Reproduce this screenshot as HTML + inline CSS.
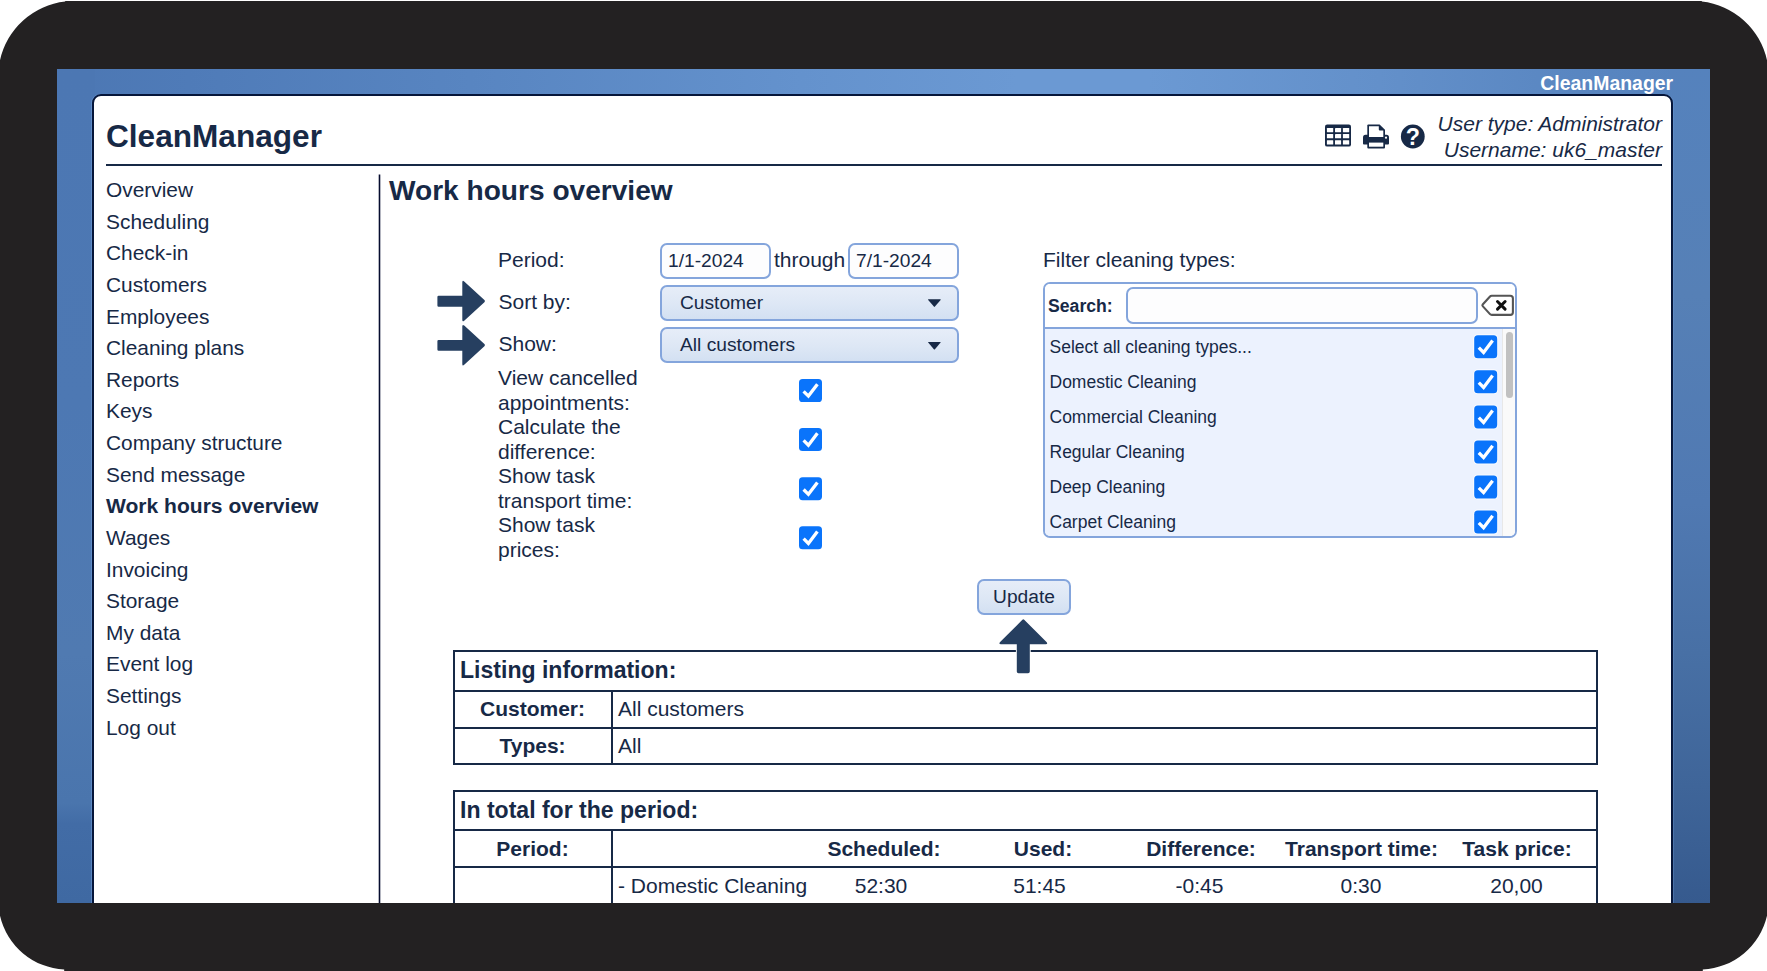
<!DOCTYPE html>
<html>
<head>
<meta charset="utf-8">
<title>CleanManager</title>
<style>
*{box-sizing:border-box;margin:0;padding:0}
html,body{width:1767px;height:971px;overflow:hidden;background:#fff}
body{font-family:"Liberation Sans",sans-serif;color:#172946;position:relative}
#frame{position:absolute;left:0;top:1px;width:1767px;height:970px;background:#232122}
#corners{position:absolute;left:0;top:0}
#blue{position:absolute;left:57px;top:69px;width:1653px;height:834px;overflow:hidden;
 background:
  linear-gradient(180deg,#4c77b3 0%,#4d78b3 40%,#507ab1 70%,#4a75ad 88%,#426ca6 90.5%,#3f69a2 100%) left top/38px 100% no-repeat,
  linear-gradient(180deg,#5582bd 0%,#5680b6 27%,#5079b2 52%,#4870a5 70%,#3f6599 86%,#365a8e 100%) right top/40px 100% no-repeat,
  linear-gradient(90deg,#4c77b3 0%,#4f7bb8 8%,#5885c1 25%,#6492cd 45%,#6b99d3 58%,#6b99d3 66%,#6390ca 80%,#5986c1 92%,#5582bd 100%)}
#panel{position:absolute;left:35px;top:25px;width:1581px;height:900px;background:#fff;border:2px solid #06163a;border-radius:9px 9px 0 0;box-shadow:-1px 0 0 rgba(120,165,225,.45),1px 0 0 rgba(120,165,225,.3)}
#brand{position:absolute;left:1400px;top:4px;width:216.2px;font-weight:bold;font-size:19.45px;line-height:20px;color:#fff;text-align:right;white-space:nowrap}
#page{position:absolute;left:0;top:0;width:1767px;height:903px;overflow:hidden}
#title{position:absolute;white-space:nowrap;left:106px;top:118px;font-size:31.6px;font-weight:bold;line-height:36px}
#hr{position:absolute;left:106px;top:164px;width:1556px;height:2px;background:#172946}
#vr{position:absolute;left:379px;top:175px;width:2px;height:740px;background:#172946}
#menu{position:absolute;left:106px;top:174px;font-size:20.9px;line-height:31.63px}
#menu div{white-space:nowrap}
#menu .cur{font-weight:bold;font-size:21.05px}
#h1{position:absolute;white-space:nowrap;left:389px;top:174px;font-size:28.1px;font-weight:bold;line-height:34px}
#user{position:absolute;left:1400px;top:110.6px;width:262px;font-style:italic;font-size:21px;line-height:26.6px;text-align:right;white-space:nowrap}
.inp{position:absolute;background:#fdfdfe;border:2px solid #84a5dc;border-radius:7px;font-size:19.2px;line-height:32px;padding-left:6px;white-space:nowrap}
.sel{position:absolute;border:2px solid #84a5dc;border-radius:7px;font-size:19.2px;line-height:31px;padding-left:18px;white-space:nowrap;
 background:linear-gradient(180deg,#e6edf8 0%,#dde7f5 55%,#d3e0f2 100%)}
#fbox{position:absolute;left:1043px;top:282px;width:474px;height:256px;border:2px solid #84a5dc;border-radius:7px;background:#fff;overflow:hidden}
#fsearch{position:absolute;left:0;top:0;width:470px;height:45px;border-bottom:2px solid #84a5dc;background:#fff}
#flist{position:absolute;left:0;top:45px;width:470px;height:209px;background:#ecf2fe;font-size:17.5px}
#flist .it{position:absolute;left:4.5px;white-space:nowrap;line-height:22px}
.tb{position:absolute;border:2px solid #172946}
.hl{position:absolute;height:2px;background:#172946}
.vl{position:absolute;width:2px;background:#172946}
.t{position:absolute;white-space:nowrap;font-size:21px;line-height:26px}
.t.lbl{line-height:24.5px}
.b{font-weight:bold}
.c{transform:translateX(-50%)}
#ov{position:absolute;left:0;top:0;pointer-events:none}
</style>
</head>
<body>
<div id="frame"></div>
<svg id="corners" width="1767" height="971" viewBox="0 0 1767 971"><g fill="#fff"><path d="M0 0 H65.2 V1.55 A75.1 75.1 0 0 0 0 60.3 Z"/><path d="M1767 0 H1701.8 V1.55 A75.1 75.1 0 0 1 1767 60.3 Z"/><path d="M0 971 V915.7 A69.7 69.7 0 0 0 64.2 969.6 V971 Z"/><path d="M1767 971 V915.7 A69.7 69.7 0 0 1 1702.8 969.6 V971 Z"/></g></svg>
<div id="blue">
  <div id="brand">CleanManager</div>
  <div id="panel"></div>
</div>
<div id="page">
  <div id="title">CleanManager</div>
  <div id="hr"></div>
  <div id="menu"><div>Overview</div><div>Scheduling</div><div>Check-in</div><div>Customers</div><div>Employees</div><div>Cleaning plans</div><div>Reports</div><div>Keys</div><div>Company structure</div><div>Send message</div><div class="cur">Work hours overview</div><div>Wages</div><div>Invoicing</div><div>Storage</div><div>My data</div><div>Event log</div><div>Settings</div><div>Log out</div></div>
  <div id="h1">Work hours overview</div>
  <div id="user">User type: Administrator<br>Username: uk6_master</div>
  <div class="t" style="left:498px;top:247px">Period:</div>
  <div class="inp" style="left:660px;top:243px;width:111px;height:36px">1/1-2024</div>
  <div class="t" style="left:774px;top:247px">through</div>
  <div class="inp" style="left:848px;top:243px;width:111px;height:36px">7/1-2024</div>
  <div class="t" style="left:498.5px;top:289px">Sort by:</div>
  <div class="sel" style="left:660px;top:285px;width:299px;height:36px">Customer</div>
  <div class="t" style="left:498.5px;top:331px">Show:</div>
  <div class="sel" style="left:660px;top:327px;width:299px;height:36px">All customers</div>
  <div class="t lbl" style="left:498px;top:366px">View cancelled<br>appointments:<br>Calculate the<br>difference:<br>Show task<br>transport time:<br>Show task<br>prices:</div>
  <div class="t" style="left:1043px;top:247px">Filter cleaning types:</div>
  <div id="fbox">
    <div id="fsearch">
      <div class="t b" style="left:3px;top:9px;font-size:17.65px">Search:</div>
      <div class="inp" style="left:81px;top:3px;width:352px;height:37px"></div>
    </div>
    <div id="flist">
      <div class="it" style="top:7px">Select all cleaning types...</div>
      <div class="it" style="top:42px">Domestic Cleaning</div>
      <div class="it" style="top:77px">Commercial Cleaning</div>
      <div class="it" style="top:112px">Regular Cleaning</div>
      <div class="it" style="top:147px">Deep Cleaning</div>
      <div class="it" style="top:182px">Carpet Cleaning</div>
      <div style="position:absolute;left:457px;top:0;width:13px;height:209px;background:#fafafa;border-left:1px solid #e8e8e8"></div>
      <div style="position:absolute;left:461px;top:3px;width:7px;height:66px;border-radius:4px;background:#c1c1c1"></div>
    </div>
  </div>
  <div class="sel" style="left:977px;top:579px;width:94px;height:36px;padding:0;text-align:center;line-height:32px">Update</div>
  <div class="tb" style="left:453px;top:650px;width:1145px;height:115px"></div>
  <div class="hl" style="left:453px;top:690px;width:1145px"></div>
  <div class="hl" style="left:453px;top:727px;width:1145px"></div>
  <div class="vl" style="left:611px;top:690px;height:75px"></div>
  <div class="t b" style="left:460px;top:657px;font-size:23.05px">Listing information:</div>
  <div class="t b c" style="left:532.5px;top:696px">Customer:</div>
  <div class="t" style="left:618px;top:696px">All customers</div>
  <div class="t b c" style="left:532.5px;top:733px">Types:</div>
  <div class="t" style="left:618px;top:733px">All</div>
  <div class="tb" style="left:453px;top:790px;width:1145px;height:200px"></div>
  <div class="hl" style="left:453px;top:829px;width:1145px"></div>
  <div class="hl" style="left:453px;top:866px;width:1145px"></div>
  <div class="vl" style="left:611px;top:829px;height:120px"></div>
  <div class="t b" style="left:460px;top:797px;font-size:23.05px">In total for the period:</div>
  <div class="t b c" style="left:532.5px;top:836px">Period:</div>
  <div class="t b c" style="left:884px;top:836px">Scheduled:</div>
  <div class="t b c" style="left:1043px;top:836px">Used:</div>
  <div class="t b c" style="left:1201px;top:836px">Difference:</div>
  <div class="t b c" style="left:1361.5px;top:836px">Transport time:</div>
  <div class="t b c" style="left:1517px;top:836px">Task price:</div>
  <div class="t" style="left:618px;top:873px">- Domestic Cleaning</div>
  <div class="t c" style="left:881px;top:873px">52:30</div>
  <div class="t c" style="left:1039.5px;top:873px">51:45</div>
  <div class="t c" style="left:1199.5px;top:873px">-0:45</div>
  <div class="t c" style="left:1361px;top:873px">0:30</div>
  <div class="t c" style="left:1516.5px;top:873px">20,00</div>
  <svg id="ov" width="1767" height="971" viewBox="0 0 1767 971"><rect x="378.7" y="174.5" width="1.6" height="740" fill="#060c2e"/>
<g transform="translate(1325,124.4)"><rect x="0" y="0" width="26" height="22.2" rx="2.2" fill="#172946"/><g fill="#fff"><rect x="1.9" y="3.7" width="6.3" height="4.1" rx=".4"/><rect x="10" y="3.7" width="6.1" height="4.1" rx=".4"/><rect x="17.9" y="3.7" width="6.3" height="4.1" rx=".4"/><rect x="1.9" y="9.7" width="6.3" height="4.2" rx=".4"/><rect x="10" y="9.7" width="6.1" height="4.2" rx=".4"/><rect x="17.9" y="9.7" width="6.3" height="4.2" rx=".4"/><rect x="1.9" y="15.8" width="6.3" height="4.4" rx=".4"/><rect x="10" y="15.8" width="6.1" height="4.4" rx=".4"/><rect x="17.9" y="15.8" width="6.3" height="4.4" rx=".4"/></g></g>
<g transform="translate(1363,124.5)"><g fill="#172946"><path d="M4.3 1 Q4.3 0 5.3 0 H16.6 L22 5.2 V13 H4.3 Z"/><path d="M0 12.7 Q0 10.2 2.5 10.2 H23.5 Q26 10.2 26 12.7 V19 Q26 20 25 20 H0.9 Q0 20 0 19 Z"/><rect x="4.3" y="17.2" width="17.7" height="6.8" rx="1"/></g><g fill="#fff"><path d="M6 1.7 H15.8 V4.9 Q15.8 5.9 16.8 5.9 H20.3 V12.4 H6 Z"/><rect x="6" y="18.1" width="14.3" height="4.1"/><circle cx="23" cy="13.2" r="1.1"/></g></g>
<g transform="translate(1412.8,136.5)"><circle cx="0" cy="0" r="11.9" fill="#172946"/><text x="0" y="8.2" text-anchor="middle" font-family="Liberation Sans, sans-serif" font-weight="bold" font-size="23.3" fill="#fff">?</text></g>
<g transform="translate(437.4,280.8)"><path d="M1.2 15 H24.9 V1.6 Q24.9 -1 26.8 0.7 L47 19.2 Q48.2 20.3 47 21.4 L26.8 39.9 Q24.9 41.6 24.9 39 V25.9 H1.2 Q0 25.9 0 24.7 V16.2 Q0 15 1.2 15 Z" fill="#263f60" stroke="#fff" stroke-width="1.6" paint-order="stroke"/></g><g transform="translate(437.4,324.9)"><path d="M1.2 15 H24.9 V1.6 Q24.9 -1 26.8 0.7 L47 19.2 Q48.2 20.3 47 21.4 L26.8 39.9 Q24.9 41.6 24.9 39 V25.9 H1.2 Q0 25.9 0 24.7 V16.2 Q0 15 1.2 15 Z" fill="#263f60" stroke="#fff" stroke-width="1.6" paint-order="stroke"/></g><g transform="translate(799,379)"><rect x="0" y="0" width="23" height="23" rx="3.6" fill="#0a74fb"/><path d="M4.6 12.3 L9.4 17.1 L18.4 5.2" fill="none" stroke="#fff" stroke-width="3.3"/></g><g transform="translate(799,428.1)"><rect x="0" y="0" width="23" height="23" rx="3.6" fill="#0a74fb"/><path d="M4.6 12.3 L9.4 17.1 L18.4 5.2" fill="none" stroke="#fff" stroke-width="3.3"/></g><g transform="translate(799,477.2)"><rect x="0" y="0" width="23" height="23" rx="3.6" fill="#0a74fb"/><path d="M4.6 12.3 L9.4 17.1 L18.4 5.2" fill="none" stroke="#fff" stroke-width="3.3"/></g><g transform="translate(799,526.3)"><rect x="0" y="0" width="23" height="23" rx="3.6" fill="#0a74fb"/><path d="M4.6 12.3 L9.4 17.1 L18.4 5.2" fill="none" stroke="#fff" stroke-width="3.3"/></g><g transform="translate(1474.2,335.3)"><rect x="-1" y="-1" width="25" height="25" rx="4.4" fill="#fff" fill-opacity=".75"/><rect x="0" y="0" width="23" height="23" rx="3.6" fill="#0a74fb"/><path d="M4.6 12.3 L9.4 17.1 L18.4 5.2" fill="none" stroke="#fff" stroke-width="3.3"/></g><g transform="translate(1474.2,370.35)"><rect x="-1" y="-1" width="25" height="25" rx="4.4" fill="#fff" fill-opacity=".75"/><rect x="0" y="0" width="23" height="23" rx="3.6" fill="#0a74fb"/><path d="M4.6 12.3 L9.4 17.1 L18.4 5.2" fill="none" stroke="#fff" stroke-width="3.3"/></g><g transform="translate(1474.2,405.4)"><rect x="-1" y="-1" width="25" height="25" rx="4.4" fill="#fff" fill-opacity=".75"/><rect x="0" y="0" width="23" height="23" rx="3.6" fill="#0a74fb"/><path d="M4.6 12.3 L9.4 17.1 L18.4 5.2" fill="none" stroke="#fff" stroke-width="3.3"/></g><g transform="translate(1474.2,440.45)"><rect x="-1" y="-1" width="25" height="25" rx="4.4" fill="#fff" fill-opacity=".75"/><rect x="0" y="0" width="23" height="23" rx="3.6" fill="#0a74fb"/><path d="M4.6 12.3 L9.4 17.1 L18.4 5.2" fill="none" stroke="#fff" stroke-width="3.3"/></g><g transform="translate(1474.2,475.5)"><rect x="-1" y="-1" width="25" height="25" rx="4.4" fill="#fff" fill-opacity=".75"/><rect x="0" y="0" width="23" height="23" rx="3.6" fill="#0a74fb"/><path d="M4.6 12.3 L9.4 17.1 L18.4 5.2" fill="none" stroke="#fff" stroke-width="3.3"/></g><g transform="translate(1474.2,510.55)"><rect x="-1" y="-1" width="25" height="25" rx="4.4" fill="#fff" fill-opacity=".75"/><rect x="0" y="0" width="23" height="23" rx="3.6" fill="#0a74fb"/><path d="M4.6 12.3 L9.4 17.1 L18.4 5.2" fill="none" stroke="#fff" stroke-width="3.3"/></g><g transform="translate(1482.3,295.7)"><path d="M9.4 0 H28 Q30.6 0 30.6 2.6 V16.6 Q30.6 19.2 28 19.2 H9.4 Q8.4 19.2 7.7 18.4 L0.4 10.4 Q-0.3 9.6 0.4 8.8 L7.7 0.8 Q8.4 0 9.4 0 Z" fill="#fff" stroke="#555" stroke-width="2.1" stroke-linejoin="round"/><path d="M15.2 5.8 L22.8 13.4 M22.8 5.8 L15.2 13.4" stroke="#111" stroke-width="3" stroke-linecap="round"/></g><path d="M928.5 299.3 h11.8 q0.8 0 0.3 .6 l-5.65 6.7 q-.55 .6 -1.1 0 l-5.65 -6.7 q-.5 -.6 .3 -.6 z" fill="#172946"/><path d="M928.5 341.9 h11.8 q0.8 0 0.3 .6 l-5.65 6.7 q-.55 .6 -1.1 0 l-5.65 -6.7 q-.5 -.6 .3 -.6 z" fill="#172946"/><g transform="translate(1023.3,619.2)"><path d="M-0.9 0.6 Q0 -0.3 0.9 0.6 L23.2 22.9 Q24.9 25 22.4 25 H6.5 V52.3 Q6.5 54 4.8 54 H-4.8 Q-6.5 54 -6.5 52.3 V25 H-22.4 Q-24.9 25 -23.2 22.9 Z" fill="#263f60" stroke="#fff" stroke-width="1.8" paint-order="stroke"/></g></svg>
</div>
</body>
</html>
